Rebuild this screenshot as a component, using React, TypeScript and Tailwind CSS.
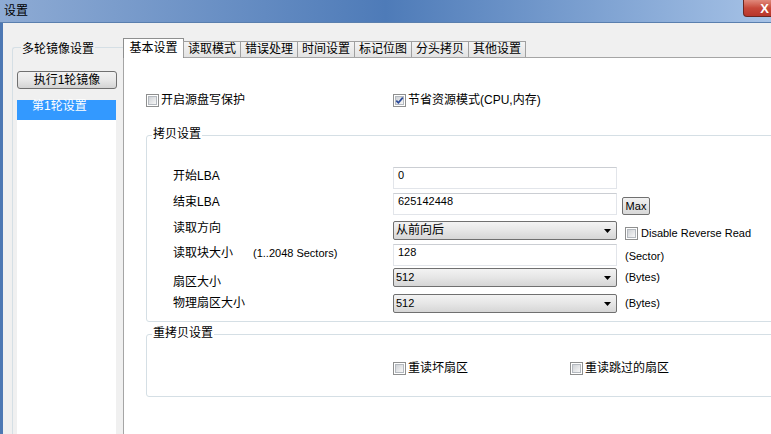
import React from 'react';

const TABS = ['读取模式', '错误处理', '时间设置', '标记位图', '分头拷贝', '其他设置'];

function Check({ checked }: { checked?: boolean }) {
  return (
    <span className="relative block w-[13px] h-[13px] shrink-0 border border-[#8e8f8f] bg-white p-px">
      <span className="block w-full h-full border border-[#b4b9bf] bg-gradient-to-br from-[#cfd2d6] to-[#f7f7f7]" />
      {checked && (
        <svg className="absolute left-0 top-0" width="11" height="11" viewBox="0 0 11 11">
          <path d="M2.3 5.6 L4.4 7.8 L8.8 2.6" fill="none" stroke="#2a4a9a" strokeWidth="1.7" />
        </svg>
      )}
    </span>
  );
}

function Field({ value }: { value: string }) {
  return (
    <div className="w-[224px] h-[22px] shrink-0 border border-[#e2e5ea] border-t-[#cbced3] bg-white pl-[4px] pt-[1px] text-[11px] leading-[13px]">
      {value}
    </div>
  );
}

function Select({ value, cjk }: { value: string; cjk?: boolean }) {
  return (
    <div className="w-[224px] h-[19px] shrink-0 flex items-center justify-between border border-[#707070] rounded-[2px] bg-gradient-to-b from-[#f3f3f3] via-[#e6e6e6] to-[#d6d6d6] pl-[2px] pr-[5px]">
      <span className={cjk ? 'text-[12px] leading-[13px]' : 'text-[11px] leading-[13px]'}>{value}</span>
      <svg width="7" height="4" viewBox="0 0 7 4">
        <path d="M0 0H7L3.5 4Z" fill="#000" />
      </svg>
    </div>
  );
}

function Row({
  label,
  labelPt,
  mt,
  h,
  hint,
  children,
  extra,
}: {
  label: string;
  labelPt: number;
  mt: string;
  h: string;
  hint?: string;
  children: React.ReactNode;
  extra?: React.ReactNode;
}) {
  const pts: Record<number, string> = { 1: 'pt-[1px]', 3: 'pt-[3px]', 8: 'pt-[8px]' };
  return (
    <div className={`flex items-start ${mt} ${h}`}>
      <div className={`w-[220px] shrink-0 flex text-[12px] leading-[13px] ${pts[labelPt]}`}>
        <span className="w-[80px] shrink-0">{label}</span>
        {hint && <span className="text-[11px]">{hint}</span>}
      </div>
      {children}
      {extra}
    </div>
  );
}

export default function App() {
  return (
    <div className="w-[771px] h-[434px] overflow-hidden flex flex-col bg-[#f0f0f0] text-black font-['Liberation_Sans','Noto_Sans_CJK_SC',sans-serif]">
      {/* title bar */}
      <div className="relative h-[23px] shrink-0 border-b border-[#5a7fae] bg-gradient-to-r from-[#8eabd4] via-[#4e7bb8] to-[#a6c2e6] flex items-center pl-[4px]">
        <span className="text-[12px] leading-[13px] text-black">设置</span>
        <div className="absolute left-[743px] top-0 w-[43px] h-[17px] rounded-bl-[4px] border border-t-0 border-[#6b2620] bg-gradient-to-b from-[#e0897c] via-[#c7483a] to-[#b8362b] flex items-center justify-center">
          <span className="text-white font-bold text-[13px] leading-[13px]">X</span>
        </div>
      </div>

      <div className="flex flex-1 min-h-0 border-l-[3px] border-[#4d78b3]">
        {/* left column */}
        <div className="w-[120px] shrink-0 pl-[9px] pt-[24px] flex flex-col">
          <div className="relative flex-1 border-l border-t border-[#d5dfe5] rounded-tl-[3px] pl-[4px] pt-[23px] flex flex-col">
            <span className="absolute left-[8px] -top-[5px] bg-[#f0f0f0] px-px text-[12px] leading-[13px]">多轮镜像设置</span>
            <button className="w-[100px] h-[18px] shrink-0 border border-[#707070] rounded-[3px] bg-gradient-to-b from-[#f2f2f2] via-[#e8e8e8] to-[#d4d4d4] text-[12px] leading-[13px]">
              执行1轮镜像
            </button>
            <div className="mt-[11px] flex-1 w-[99px] bg-white">
              <div className="h-[20px] bg-[#3399ff] text-white pl-[15px] text-[12px] leading-[13px]">第1轮设置</div>
            </div>
          </div>
        </div>

        {/* tab control */}
        <div className="flex-1 min-w-0 flex flex-col pt-[15px]">
          <div className="relative z-10 flex items-end h-[20px] shrink-0 text-[12px] leading-[13px]">
            <div className="w-[61px] h-[20px] border border-b-0 border-[#8e8f8f] bg-white flex justify-center pt-[3px]">基本设置</div>
            {TABS.map((t) => (
              <div
                key={t}
                className="-ml-px w-[58px] h-[16px] mb-px border border-b-0 border-[#a0a0a0] bg-gradient-to-b from-[#f4f4f4] to-[#e3e3e3] flex items-center justify-center"
              >
                {t}
              </div>
            ))}
          </div>

          <div className="flex-1 -mt-px bg-white border-l border-t border-[#a5a5a5] pl-[22px] pt-[36px] flex flex-col">
            <div className="flex items-center h-[13px] text-[12px] leading-[13px]">
              <div className="w-[247px] shrink-0 flex items-center gap-[2px]">
                <Check />
                <span>开启源盘写保护</span>
              </div>
              <div className="flex items-center gap-[2px]">
                <Check checked />
                <span>节省资源模式(CPU,内存)</span>
              </div>
            </div>

            {/* 拷贝设置 */}
            <div className="relative mt-[28px] w-[640px] shrink-0 border border-[#d5dfe5] rounded-[3px] pl-[26px] pt-[31px] pb-[8px]">
              <span className="absolute left-[5px] -top-[8px] bg-white px-px text-[12px] leading-[13px]">拷贝设置</span>
              <Row label="开始LBA" labelPt={3} mt="" h="h-[22px]">
                <Field value="0" />
              </Row>
              <Row
                label="结束LBA"
                labelPt={3}
                mt="mt-[4px]"
                h="h-[22px]"
                extra={
                  <div className="ml-[5px] mt-[4px] w-[28px] h-[18px] border border-[#707070] rounded-[2px] bg-gradient-to-b from-[#f2f2f2] to-[#d8d8d8] flex items-center justify-center text-[11px] leading-[13px]">
                    Max
                  </div>
                }
              >
                <Field value="625142448" />
              </Row>
              <Row
                label="读取方向"
                labelPt={1}
                mt="mt-[6px]"
                h="h-[19px]"
                extra={
                  <div className="ml-[8px] mt-[6px] flex items-center gap-[3px] text-[11px] leading-[13px]">
                    <Check />
                    <span>Disable Reverse Read</span>
                  </div>
                }
              >
                <Select value="从前向后" cjk />
              </Row>
              <Row
                label="读取块大小"
                hint="(1..2048 Sectors)"
                labelPt={3}
                mt="mt-[4px]"
                h="h-[22px]"
                extra={<span className="ml-[8px] pt-[6px] text-[11px] leading-[13px]">(Sector)</span>}
              >
                <Field value="128" />
              </Row>
              <Row
                label="扇区大小"
                labelPt={8}
                mt="mt-[2px]"
                h="h-[19px]"
                extra={<span className="ml-[8px] pt-[3px] text-[11px] leading-[13px]">(Bytes)</span>}
              >
                <Select value="512" />
              </Row>
              <Row
                label="物理扇区大小"
                labelPt={3}
                mt="mt-[7px]"
                h="h-[19px]"
                extra={<span className="ml-[8px] pt-[3px] text-[11px] leading-[13px]">(Bytes)</span>}
              >
                <Select value="512" />
              </Row>
            </div>

            {/* 重拷贝设置 */}
            <div className="relative mt-[12px] w-[640px] h-[63px] shrink-0 border border-[#d5dfe5] rounded-[3px] pl-[246px] pt-[27px]">
              <span className="absolute left-[5px] -top-[8px] bg-white px-px text-[12px] leading-[13px]">重拷贝设置</span>
              <div className="flex items-center h-[13px] text-[12px] leading-[13px]">
                <div className="w-[177px] shrink-0 flex items-center gap-[2px]">
                  <Check />
                  <span>重读坏扇区</span>
                </div>
                <div className="flex items-center gap-[2px]">
                  <Check />
                  <span>重读跳过的扇区</span>
                </div>
              </div>
            </div>
          </div>
        </div>
      </div>
    </div>
  );
}
